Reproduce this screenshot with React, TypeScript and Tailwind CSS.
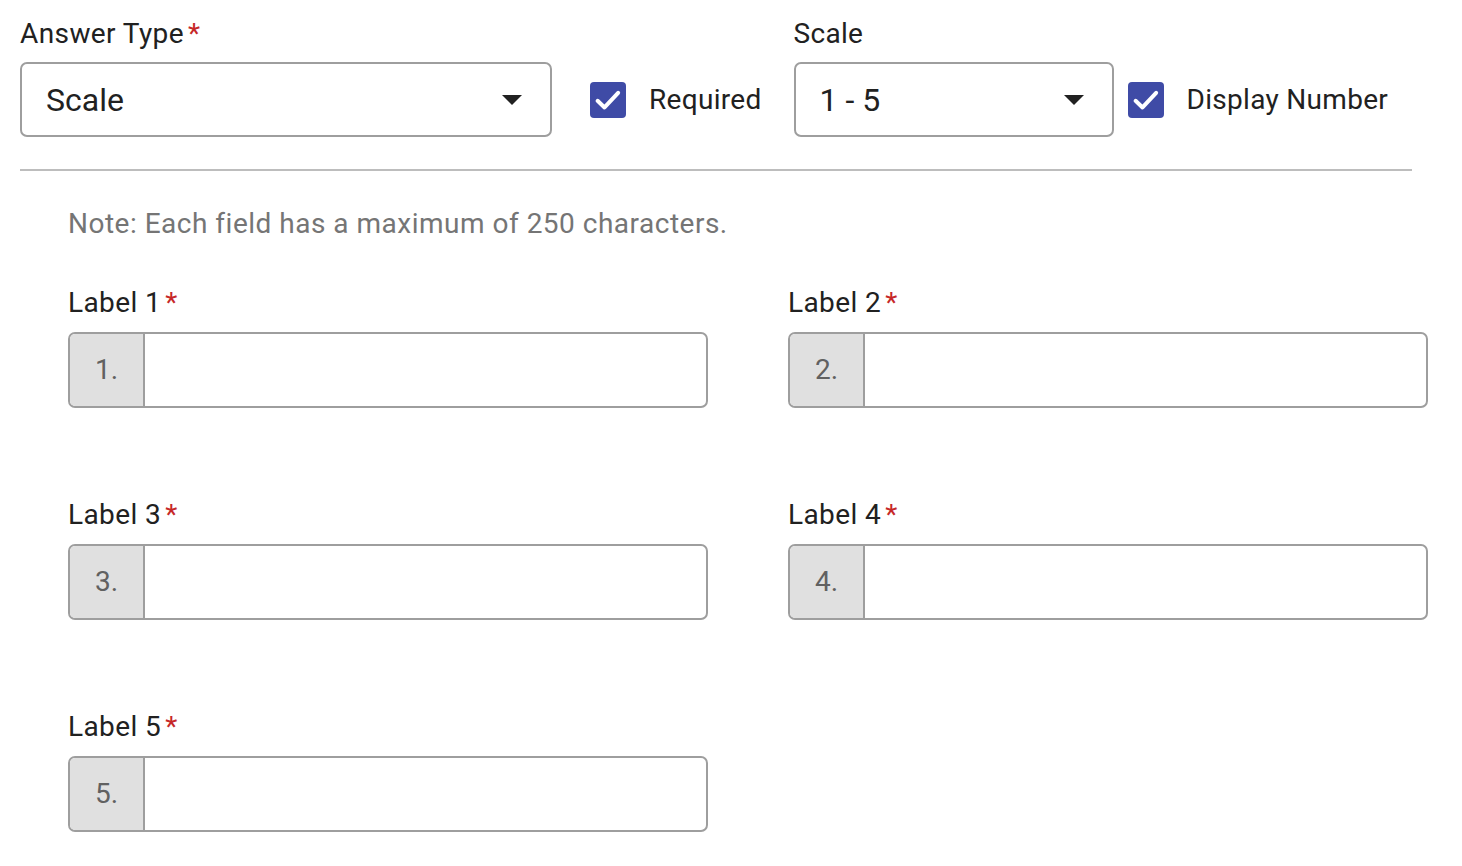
import React from "react";

const Asterisk = () => <span className="ml-[4px] text-[#c62828]">*</span>;

const Caret = () => (
  <svg width="20" height="10" viewBox="0 0 20 10" className="shrink-0">
    <path d="M0 0 L20 0 L10 10 Z" fill="#212121" />
  </svg>
);

const Checkbox = ({ label }: { label: string }) => (
  <label className="flex items-center gap-[23px]">
    <span className="flex h-9 w-9 items-center justify-center rounded-[4px] bg-[#3f4ba6]">
      <svg width="32" height="32" viewBox="0 0 24 24">
        <path
          d="M4.2 12.6 L9.4 17.6 L19.6 6.6"
          fill="none"
          stroke="#fff"
          strokeWidth="3"
          strokeLinecap="round"
          strokeLinejoin="round"
        />
      </svg>
    </span>
    <span className="text-[28px] tracking-[0.3px] text-[#212121]">{label}</span>
  </label>
);

const SelectBox = ({ value, width }: { value: string; width: string }) => (
  <div
    className={`flex h-[75px] items-center justify-between rounded-[7px] border-2 border-[#9e9e9e] bg-white pl-[24px] pr-[28px] ${width}`}
  >
    <span className="text-[32px] text-[#212121]">{value}</span>
    <Caret />
  </div>
);

const LabelField = ({ n }: { n: number }) => (
  <div className="flex flex-col">
    <div className="text-[28px] leading-[34px] tracking-[0.4px] text-[#212121]">
      Label {n}
      <Asterisk />
    </div>
    <div className="mt-[12px] flex h-[76px] overflow-hidden rounded-[7px] border-2 border-[#9e9e9e] bg-white">
      <div className="flex w-[75px] items-center justify-center border-r-2 border-[#9e9e9e] bg-[#e0e0e0] text-[28px] text-[#616161]">
        {n}.
      </div>
      <div className="flex-1" />
    </div>
  </div>
);

export default function App() {
  return (
    <div
      className="min-h-[866px] w-[1462px] bg-white"
      style={{ fontFamily: "Roboto, 'Noto Sans', sans-serif" }}
    >
      <div className="px-5 pt-[17px]">
        <div className="flex items-end">
          <div className="flex flex-col">
            <div className="text-[28px] leading-[34px] tracking-[0.4px] text-[#212121]">
              Answer Type
              <Asterisk />
            </div>
            <div className="mt-[11px]">
              <SelectBox value="Scale" width="w-[532px]" />
            </div>
          </div>
          <div className="ml-[38px] flex h-[75px] items-center">
            <Checkbox label="Required" />
          </div>
          <div className="ml-[32px] flex flex-col">
            <div className="text-[28px] leading-[34px] tracking-[0.3px] text-[#212121]">
              Scale
            </div>
            <div className="mt-[11px]">
              <SelectBox value="1 - 5" width="w-[320px]" />
            </div>
          </div>
          <div className="ml-[14px] flex h-[75px] items-center">
            <Checkbox label="Display Number" />
          </div>
        </div>
        <div className="mt-[32px] h-[2px] w-[1392px] bg-[#bdbdbd]" />
      </div>

      <div className="px-[68px]">
        <p className="mt-[36px] text-[28px] leading-[34px] tracking-[0.5px] text-[#757575]">
          Note: Each field has a maximum of 250 characters.
        </p>
        <div className="mt-[45px] grid grid-cols-[640px_640px] gap-x-[80px] gap-y-[90px]">
          {[1, 2, 3, 4, 5].map((n) => (
            <LabelField key={n} n={n} />
          ))}
        </div>
      </div>
    </div>
  );
}
